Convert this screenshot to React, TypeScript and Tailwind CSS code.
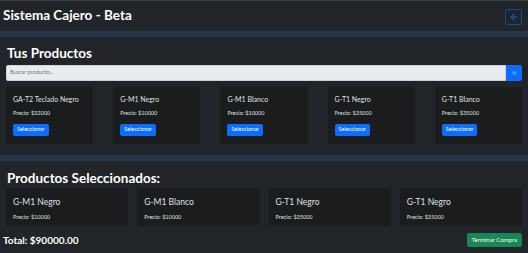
import { ArrowLeft, Search } from 'lucide-react';

const productos = [
  { nombre: 'GA-T2 Teclado Negro', precio: 32000 },
  { nombre: 'G-M1 Negro', precio: 10000 },
  { nombre: 'G-M1 Blanco', precio: 10000 },
  { nombre: 'G-T1 Negro', precio: 35000 },
  { nombre: 'G-T1 Blanco', precio: 35000 },
];

const seleccionados = [
  { nombre: 'G-M1 Negro', precio: 10000 },
  { nombre: 'G-M1 Blanco', precio: 10000 },
  { nombre: 'G-T1 Negro', precio: 35000 },
  { nombre: 'G-T1 Negro', precio: 35000 },
];

const App = () => {
  const total = seleccionados.reduce((acc, p) => acc + p.precio, 0);

  return (
    <div className="w-[528px] h-[253px] overflow-hidden bg-[#212529] text-[#dee2e6] border-t border-[#3b3f44] font-['Lato',sans-serif]">
      {/* Header */}
      <header className="h-[30px] flex items-center justify-between pl-[3px] pr-[6px]">
        <h1 className="text-[13.5px] font-bold text-white leading-none">Sistema Cajero - Beta</h1>
        <button className="w-[17px] h-[16px] border border-[#0d4ca8] rounded-[2px] flex items-center justify-center text-[#1764d6] mt-[1px]">
          <ArrowLeft size={10} strokeWidth={2.5} />
        </button>
      </header>
      <div className="h-[6px] bg-[#27374a]" />

      {/* Productos */}
      <section className="px-[6px] pt-[10px] pb-[8px]">
        <h2 className="text-[13.5px] font-bold text-white leading-none mb-[4px] pl-px">Tus Productos</h2>
        <div className="flex h-[16px] mb-[6px]">
          <input
            placeholder="Buscar producto..."
            className="flex-1 bg-[#e9ecef] border border-[#ced4da] rounded-l-[2px] px-[3px] text-[5.5px] text-[#212529] placeholder:text-[#6c757d] outline-none"
          />
          <button className="w-[16px] bg-[#0d6efd] rounded-r-[2px] flex items-center justify-center text-white">
            <Search size={4} />
          </button>
        </div>
        <div className="grid grid-cols-5 gap-[20px]">
          {productos.map((p) => (
            <div key={p.nombre} className="h-[57px] bg-[#1b1c1e] rounded-[3px] px-[7px] pt-[9px]">
              <p className="text-[7px] leading-none mb-[8px] whitespace-nowrap">{p.nombre}</p>
              <p className="text-[5.5px] leading-none mb-[8px]">Precio: ${p.precio}</p>
              <button className="block h-[12px] px-[4px] bg-[#0d6efd] rounded-[2px] text-white text-[5.5px] leading-none">
                Seleccionar
              </button>
            </div>
          ))}
        </div>
      </section>
      <div className="h-[6px] bg-[#27374a] mt-[3px]" />

      {/* Seleccionados */}
      <section className="px-[6px] pt-[11px]">
        <h2 className="text-[13.5px] font-bold text-white leading-none mb-[3px] pl-px">Productos Seleccionados:</h2>
        <div className="grid grid-cols-4 gap-[9px]">
          {seleccionados.map((p, i) => (
            <div key={i} className="h-[38px] bg-[#1b1c1e] rounded-[3px] px-[7px] pt-[10px]">
              <p className="text-[8.5px] leading-none mb-[8px]">{p.nombre}</p>
              <p className="text-[5.5px] leading-none">Precio: ${p.precio}</p>
            </div>
          ))}
        </div>
      </section>
      <div className="flex items-center justify-between pl-[3px] pr-[6px] mt-[7px]">
        <span className="text-[10px] font-bold text-white leading-none">Total: ${total.toFixed(2)}</span>
        <button className="block h-[14px] px-[5px] bg-[#198754] rounded-[2px] text-white text-[6px] leading-none">Terminar Compra</button>
      </div>
    </div>
  );
};

export default App;
